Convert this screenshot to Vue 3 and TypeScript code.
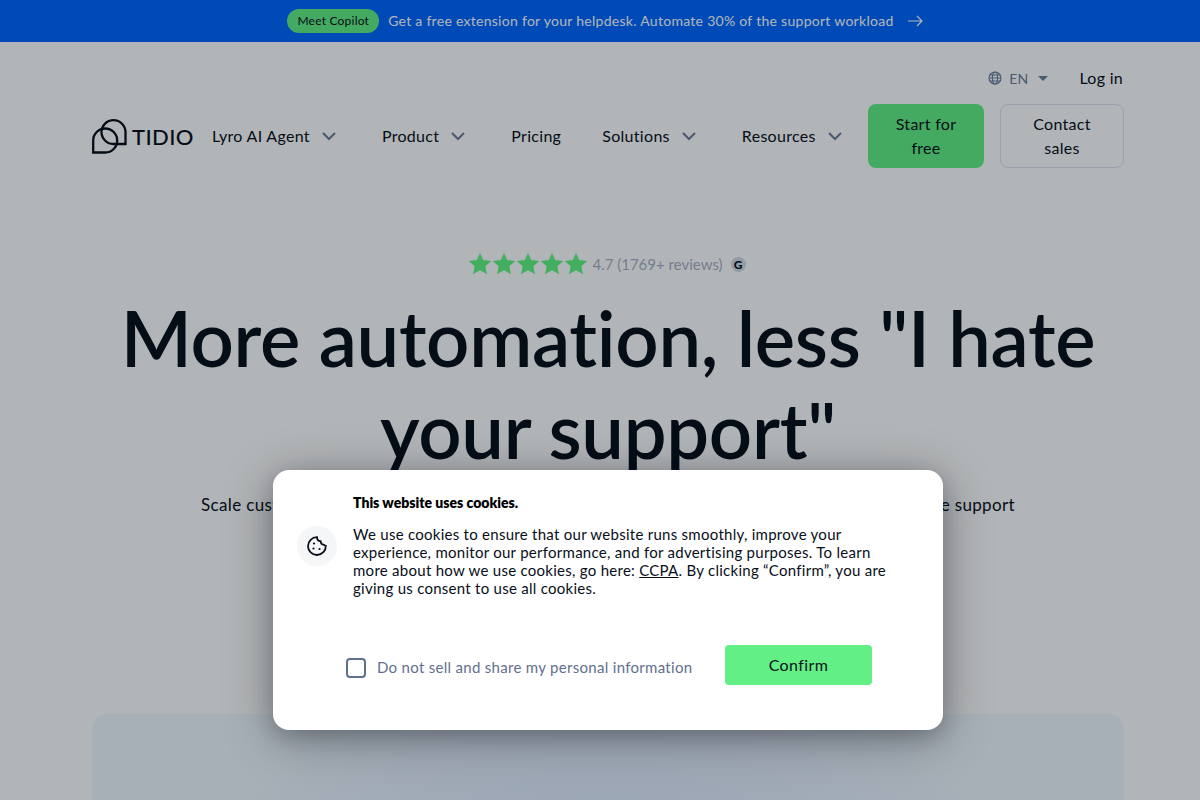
<script setup lang="ts">
const navItems = [
  { label: 'Lyro AI Agent', menu: true },
  { label: 'Product', menu: true },
  { label: 'Pricing', menu: false },
  { label: 'Solutions', menu: true },
  { label: 'Resources', menu: true },
]
const stars = [1, 2, 3, 4, 5]
</script>

<template>
  <div class="page">
    <div class="topbar">
      <span class="pill">Meet Copilot</span>
      <span class="topbar-text">Get a free extension for your helpdesk. Automate 30% of the support workload</span>
      <svg class="arrow" width="16" height="12" viewBox="0 0 16 12" fill="none" stroke="currentColor" stroke-width="1.2">
        <path d="M1 6h14M10 1l5 5-5 5" />
      </svg>
    </div>

    <header class="header">
      <div class="util-row">
        <div class="lang">
          <svg width="14" height="14" viewBox="0 0 14 14" fill="none" stroke="currentColor" stroke-width="1.1">
            <circle cx="7" cy="7" r="6" />
            <ellipse cx="7" cy="7" rx="2.6" ry="6" />
            <path d="M1 7h12M1.8 4h10.4M1.8 10h10.4" />
          </svg>
          <span>EN</span>
          <svg class="caret" width="10" height="5" viewBox="0 0 10 5"><path d="M0 0h10L5 5z" fill="currentColor" /></svg>
        </div>
        <a class="login">Log in</a>
      </div>
      <nav class="nav">
        <div class="logo">
          <svg width="35" height="35" viewBox="0 0 35 35" fill="none" stroke="#080f1a" stroke-width="2.3">
            <path d="M1.200 33.500V21.500a12 12 0 1 1 12 12z" />
            <path d="M21.500 1.200a12 12 0 0 1 12 12v11.800h-12a12 12 0 0 1-12-12 12 12 0 0 1 12-11.800z" />
          </svg>
          <span class="logo-text">TIDIO</span>
        </div>
        <div class="links">
          <a v-for="item in navItems" :key="item.label" class="link">
            {{ item.label }}
            <svg v-if="item.menu" class="chevron" width="24" height="24" viewBox="0 0 24 24" fill="none" stroke="#6c7d9b" stroke-width="2">
              <path d="M6 9l6 6 6-6" />
            </svg>
          </a>
        </div>
        <div class="actions">
          <a class="btn btn-green">Start for free</a>
          <a class="btn btn-outline">Contact sales</a>
        </div>
      </nav>
    </header>

    <main class="hero">
      <div class="rating">
        <svg v-for="s in stars" :key="s" width="24" height="22" viewBox="0 0 24 22">
          <path d="M12 0l3.300 7 7.900 .9-5.800 5.400 1.600 7.900L12 17.300l-7 3.900 1.600-7.900L.8 7.900l7.900-.9z" fill="#62f581" />
        </svg>
        <span class="rating-text">4.7 (1769+ reviews)</span>
        <span class="g2">G</span>
      </div>
      <h1 class="title">More automation, less "I hate your support"</h1>
      <p class="lead">Scale customer service with an AI agent that resolves most requests, so your team can give more support<br />quickly and focus on the conversations that really need a human touch and attention.</p>
      <div class="media"></div>
    </main>

    <div class="overlay"></div>

    <div class="modal">
      <div class="modal-body">
        <div class="cookie">
          <svg width="20" height="20" viewBox="0 0 20 20" fill="none" stroke="#080f1a" stroke-width="1.8">
            <path d="M10 1.200a4 4 0 0 0 3.600 4 3.800 3.800 0 0 0 3.400 3.600 2.800 2.800 0 0 0 1.800 1A8.900 8.900 0 1 1 10 1.200z" />
            <circle cx="7" cy="7.500" r="1.100" fill="#080f1a" stroke="none" />
            <circle cx="6.500" cy="12.500" r="1.100" fill="#080f1a" stroke="none" />
            <circle cx="12.500" cy="13" r="1.100" fill="#080f1a" stroke="none" />
          </svg>
        </div>
        <div class="copy">
          <h2 class="copy-title">This website uses cookies.</h2>
          <p class="copy-text">We use cookies to ensure that our website runs smoothly, improve your experience, monitor our performance, and for advertising purposes. To learn more about how we use cookies, go here: <u>CCPA</u>. By clicking “Confirm”, you are giving us consent to use all cookies.</p>
        </div>
      </div>
      <div class="modal-foot">
        <label class="check">
          <span class="box"></span>
          <span class="check-label">Do not sell and share my personal information</span>
        </label>
        <button class="confirm">Confirm</button>
      </div>
    </div>
  </div>
</template>

<style>
html, body {
  margin: 0;
  height: 100%;
  overflow: hidden;
}
</style>

<style scoped>
.page {
  position: relative;
  width: 1216px;
  height: 800px;
  overflow: hidden;
  background: #fff;
  color: #080f1a;
  font-family: "Lato", "Noto Sans", sans-serif;
  font-variant-ligatures: none;
}
.page * {
  letter-spacing: 0.018em;
}
.topbar {
  height: 42px;
  background: #0066ff;
  display: flex;
  align-items: center;
  justify-content: center;
  gap: 9px;
  font-size: 14px;
  color: #fff;
  padding-bottom: 1px;
  box-sizing: border-box;
}
.topbar-text {
  letter-spacing: 0.28px;
}
.pill {
  background: #62f086;
  color: #080f1a;
  font-size: 12px;
  height: 24px;
  line-height: 24px;
  padding: 0 10px;
  border-radius: 12px;
}
.arrow {
  margin-left: 4px;
  margin-right: 6px;
}
.header {
  width: 1032px;
  margin: 0 auto;
}
.util-row {
  display: flex;
  justify-content: flex-end;
  align-items: center;
  gap: 31px;
  height: 24px;
  margin-top: 24px;
}
.lang {
  display: flex;
  align-items: center;
  gap: 7px;
  color: #6c7d9b;
  font-size: 14px;
}
.caret {
  margin-left: 3px;
}
.login {
  font-size: 16px;
  margin-right: 1px;
  margin-bottom: 2px;
}
.nav {
  display: flex;
  align-items: center;
  height: 64px;
  margin-top: 14px;
}
.logo {
  display: flex;
  align-items: center;
  gap: 5px;
  width: 120px;
  flex: none;
}
.logo-text {
  font-size: 22px;
  font-weight: 500;
}
.links {
  display: flex;
  flex: 1;
  font-size: 16px;
  gap: 41px;
  padding-bottom: 1px;
}
.link {
  display: flex;
  align-items: center;
  white-space: nowrap;
  letter-spacing: 0.3px;
}
.chevron {
  margin-left: 7px;
}
.actions {
  display: flex;
  gap: 16px;
}
.btn {
  box-sizing: border-box;
  height: 64px;
  border-radius: 8px;
  display: flex;
  align-items: center;
  justify-content: center;
  text-align: center;
  font-size: 16px;
  line-height: 24px;
}
.btn-green {
  width: 116px;
  padding: 0 24px;
  background: #62f086;
}
.btn-outline {
  width: 124px;
  padding: 0 24px;
  border: 1px solid #dde4f0;
}
.hero {
  display: flex;
  flex-direction: column;
  align-items: center;
}
.rating {
  display: flex;
  align-items: center;
  margin-top: 84px;
  height: 24px;
  padding-right: 2px;
}
.rating-text {
  margin-left: 4px;
  color: #a8b1c4;
  font-size: 15px;
  letter-spacing: 0;
}
.g2 {
  margin-left: 8px;
  width: 15px;
  height: 15px;
  border-radius: 50%;
  background: #d2dbea;
  color: #080f1a;
  font-size: 12px;
  font-weight: 900;
  line-height: 15px;
  text-align: center;
  letter-spacing: 0;
}
.title {
  width: 1032px;
  margin: 16px 0 0;
  text-align: center;
  font-size: 76px;
  font-weight: 600;
  line-height: 92px;
  letter-spacing: -0.3px;
}
.lead {
  width: 1032px;
  margin: 17px 0 0;
  text-align: center;
  font-size: 17px;
  line-height: 24px;
  letter-spacing: 0.35px;
}
.media {
  width: 1032px;
  height: 400px;
  margin-top: 173px;
  border-radius: 16px;
  background: radial-gradient(ellipse 420px 220px at 50% 160px, #d8e6ff, #f1f8ff);
}
.overlay {
  position: absolute;
  inset: 0;
  background: rgba(0, 10, 18, 0.3);
}
.modal {
  position: absolute;
  left: 273px;
  top: 470px;
  width: 670px;
  height: 260px;
  box-sizing: border-box;
  background: #fff;
  border-radius: 16px;
  box-shadow: 0 8px 48px rgba(0, 8, 20, 0.36), 0 6px 20px rgba(0, 8, 20, 0.16);
  padding: 24px;
  display: flex;
  flex-direction: column;
}
.modal-body {
  display: flex;
  align-items: center;
  gap: 16px;
}
.cookie {
  flex: none;
  width: 40px;
  height: 40px;
  border-radius: 50%;
  background: #f5f6f8;
  display: flex;
  align-items: center;
  justify-content: center;
}
.copy {
  width: 545px;
}
.copy-title {
  margin: 0 0 13px;
  font-size: 14px;
  line-height: 18px;
  font-weight: 800;
  color: #000;
  letter-spacing: 0;
}
.copy-text {
  margin: 0;
  font-size: 15px;
  line-height: 18px;
}
.modal-foot {
  display: flex;
  align-items: flex-start;
  margin-top: 48px;
  padding-left: 49px;
}
.check {
  display: flex;
  align-items: center;
  gap: 11px;
  font-size: 15px;
  color: #5f6f8f;
  width: 379px;
  height: 20px;
  margin-top: 13px;
}
.check-label {
  padding-bottom: 2px;
  letter-spacing: 0.3px;
}
.box {
  box-sizing: border-box;
  width: 20px;
  height: 20px;
  border: 2px solid #5f6f8f;
  border-radius: 4px;
}
.confirm {
  width: 147px;
  height: 40px;
  border: 0;
  border-radius: 4px;
  background: #62f086;
  color: #080f1a;
  font: inherit;
  font-size: 16px;
  letter-spacing: 0.4px;
  padding: 0 0 2px;
}
</style>
